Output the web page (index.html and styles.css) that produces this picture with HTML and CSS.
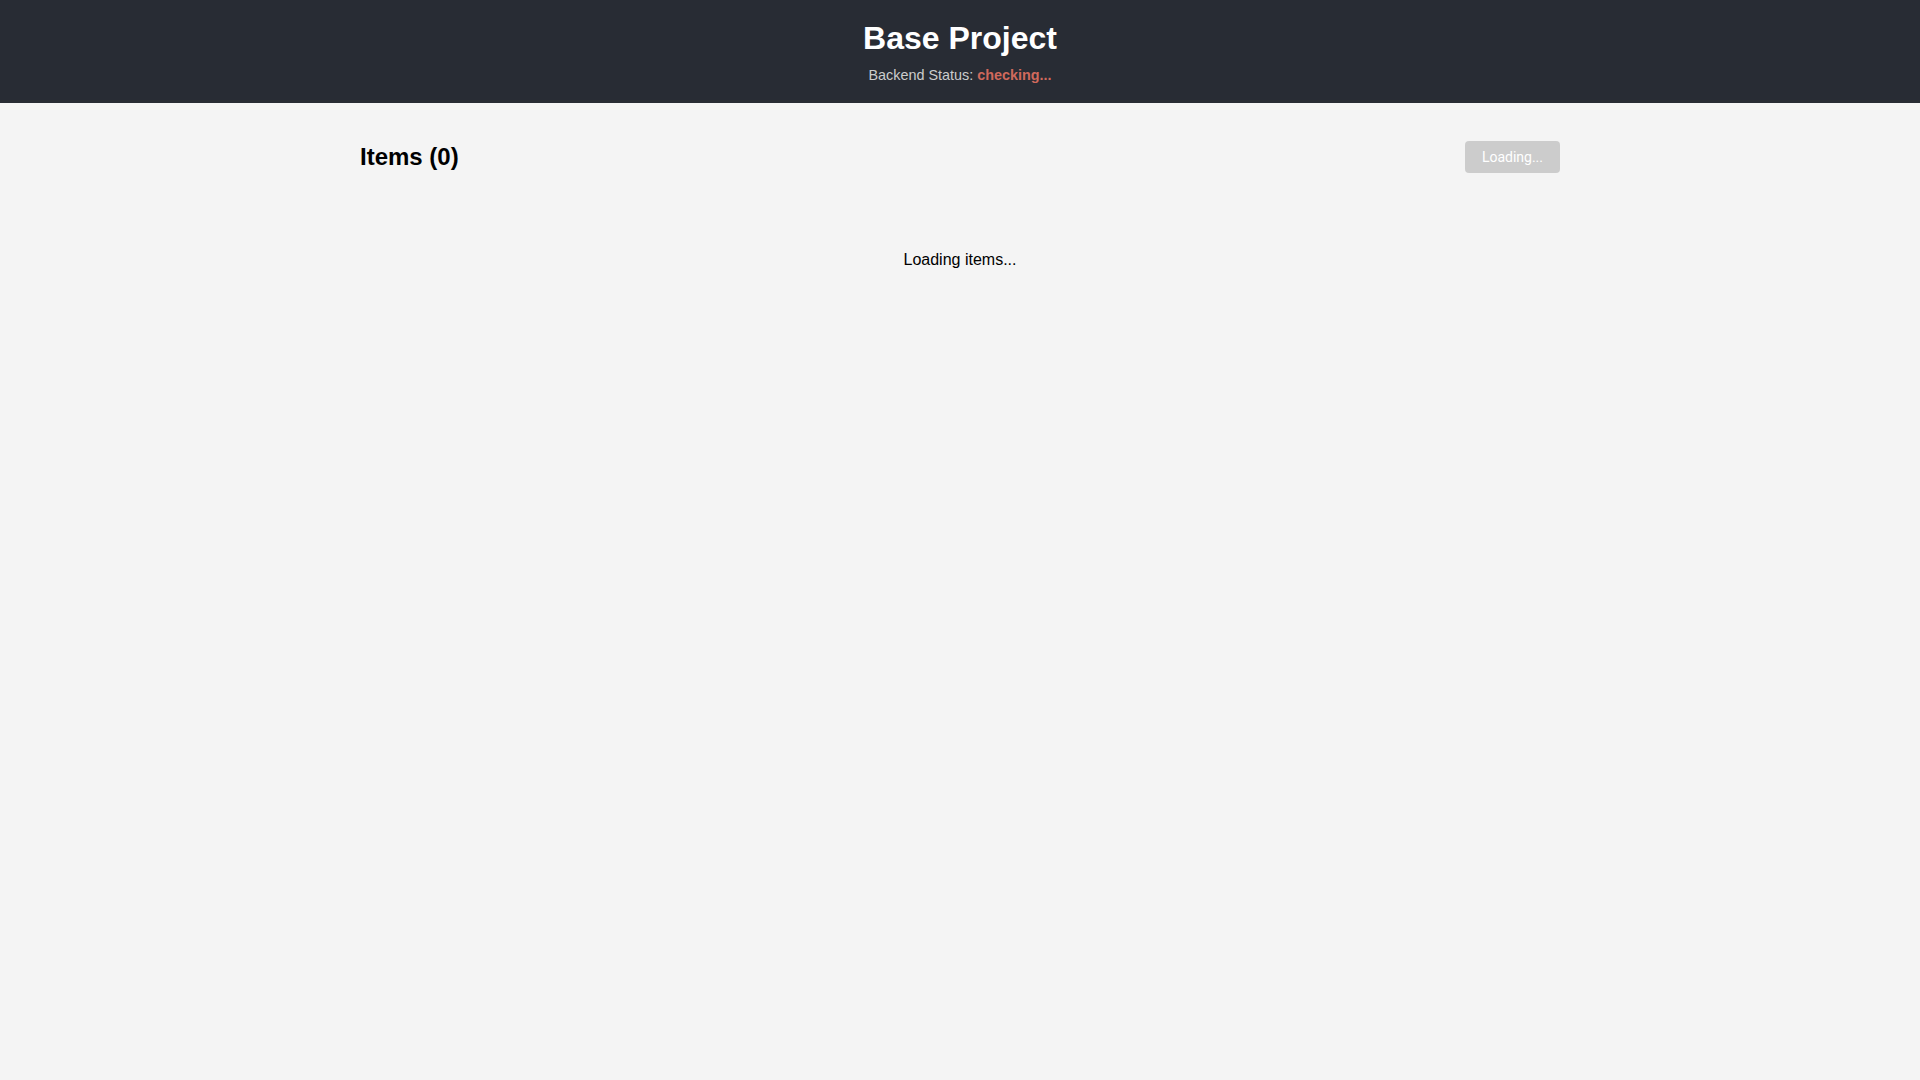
FILE: index.html
```html
<!DOCTYPE html>
<html lang="en">
<head>
<meta charset="utf-8">
<title>Base Project</title>
<link rel="stylesheet" href="styles.css">
</head>
<body>
<header class="app-header">
  <h1 class="app-title">Base Project</h1>
  <p class="status">Backend Status: <span class="status-value">checking...</span></p>
</header>
<main class="container">
  <div class="items-header">
    <h2 class="items-title">Items (0)</h2>
    <button class="refresh-btn" disabled>Loading...</button>
  </div>
  <div class="loading">Loading items...</div>
</main>
</body>
</html>
```

FILE: styles.css
```css
html, body {
  margin: 0;
  padding: 0;
}
body {
  background: #f4f4f4;
  font-family: "Liberation Sans", Arial, sans-serif;
  color: #000;
  min-height: 100vh;
}
.app-header {
  background: #282c34;
  color: #fff;
  text-align: center;
  padding: 20px;
}
.app-title {
  margin: 0 0 10px;
  font-size: 32px;
  font-weight: bold;
}
.status {
  margin: 0;
  font-size: 14.4px;
  color: #cccccc;
}
.status-value {
  color: #d0695c;
  font-weight: bold;
}
.container {
  max-width: 1200px;
  margin: 0 auto;
  padding-top: 38px;
}
.items-header {
  display: flex;
  justify-content: space-between;
  align-items: center;
  margin-bottom: 38px;
}
.items-title {
  margin: 0;
  font-size: 24px;
  font-weight: bold;
}
.refresh-btn {
  background: #cccccc;
  color: #fff;
  border: none;
  border-radius: 4px;
  padding: 0 17px;
  font-family: Roboto, "Noto Sans", sans-serif;
  font-size: 14px;
  height: 32px;
  cursor: not-allowed;
}
.loading {
  text-align: center;
  font-size: 16px;
  padding: 40px 0;
}
```
